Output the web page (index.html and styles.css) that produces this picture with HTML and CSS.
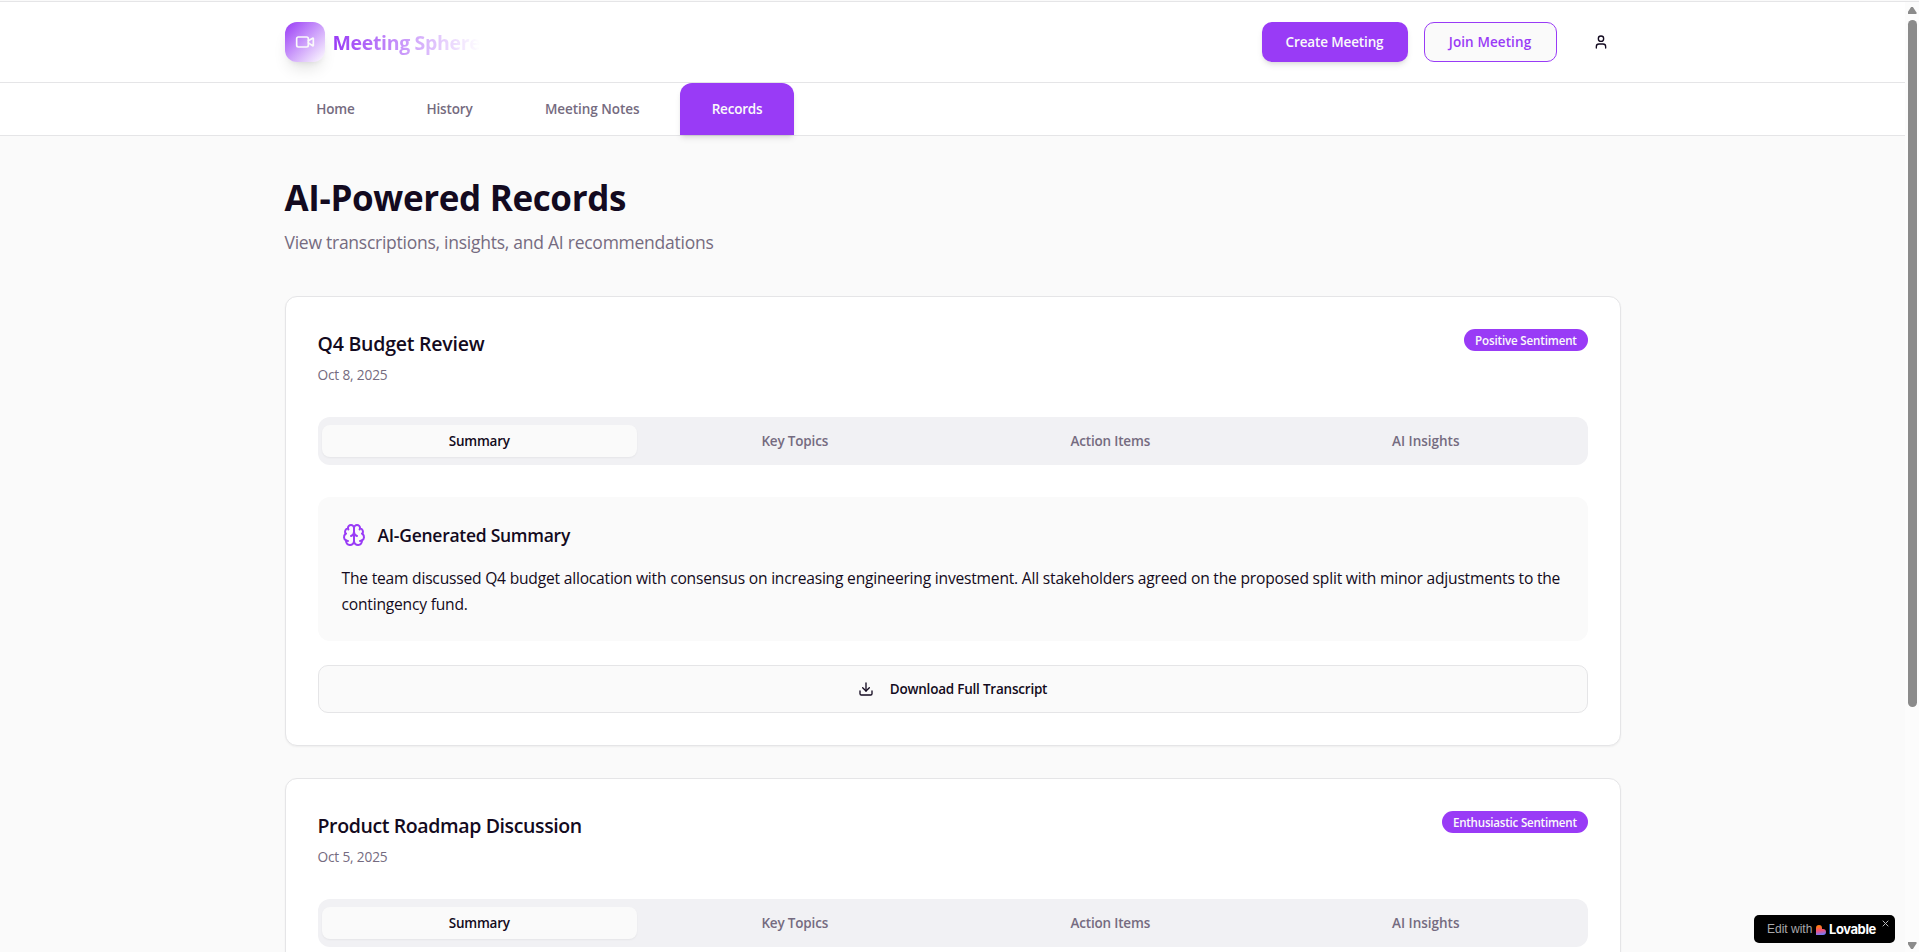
FILE: index.html
```html
<!DOCTYPE html>
<html lang="en">
<head>
<meta charset="utf-8">
<title>Meeting Sphere</title>
<link rel="stylesheet" href="styles.css">
</head>
<body>
<div class="page">
  <header class="topbar">
    <div class="container topbar-row">
      <div class="brand">
        <span class="logo"><svg class="icon" width="20" height="20" viewBox="0 0 24 24"><path d="m16 13 5.223 3.482a.5.5 0 0 0 .777-.416V7.87a.5.5 0 0 0-.752-.432L16 10.5"/><rect x="2" y="6" width="14" height="12" rx="2"/></svg></span>
        <span class="brand-name">Meeting Sphere</span>
      </div>
      <div class="actions">
        <button class="btn create">Create Meeting</button>
        <button class="btn join">Join Meeting</button>
        <button class="user" aria-label="Account"><svg class="icon" width="16" height="16" viewBox="0 0 24 24"><path d="M19 21v-2a4 4 0 0 0-4-4H9a4 4 0 0 0-4 4v2"/><circle cx="12" cy="7" r="4"/></svg></button>
      </div>
    </div>
  </header>
  <nav class="nav">
    <div class="container nav-row">
      <a class="nav-link home">Home</a>
      <a class="nav-link history">History</a>
      <a class="nav-link notes">Meeting Notes</a>
      <a class="nav-link records">Records</a>
    </div>
  </nav>
  <main class="container main">
    <h1 class="title">AI-Powered Records</h1>
    <p class="subtitle">View transcriptions, insights, and AI recommendations</p>

    <section class="card">
      <div class="card-head">
        <div>
          <h2 class="card-title">Q4 Budget Review</h2>
          <p class="date">Oct 8, 2025</p>
        </div>
        <span class="badge">Positive Sentiment</span>
      </div>
      <div class="tabs">
        <button class="tab active">Summary</button>
        <button class="tab">Key Topics</button>
        <button class="tab">Action Items</button>
        <button class="tab insights">AI Insights</button>
      </div>
      <div class="panel">
        <div class="panel-head">
          <svg class="icon brain" width="24" height="24" viewBox="0 0 24 24"><path d="M12 5a3 3 0 1 0-5.997.125 4 4 0 0 0-2.526 5.77 4 4 0 0 0 .556 6.588A4 4 0 1 0 12 18Z"/><path d="M12 5a3 3 0 1 1 5.997.125 4 4 0 0 1 2.526 5.77 4 4 0 0 1-.556 6.588A4 4 0 1 1 12 18Z"/><path d="M15 13a4.5 4.5 0 0 1-3-4 4.5 4.5 0 0 1-3 4"/><path d="M17.599 6.5a3 3 0 0 0 .399-1.375"/><path d="M6.003 5.125A3 3 0 0 0 6.401 6.5"/><path d="M3.477 10.896a4 4 0 0 1 .585-.396"/><path d="M19.938 10.5a4 4 0 0 1 .585.396"/><path d="M6 18a4 4 0 0 1-1.967-.516"/><path d="M19.967 17.484A4 4 0 0 1 18 18"/></svg>
          <h3 class="panel-title">AI-Generated Summary</h3>
        </div>
        <p class="panel-text">The team discussed Q4 budget allocation with consensus on increasing engineering investment. All stakeholders agreed on the proposed split with minor adjustments to the contingency fund.</p>
      </div>
      <button class="download"><svg class="icon" width="16" height="16" viewBox="0 0 24 24"><path d="M21 15v4a2 2 0 0 1-2 2H5a2 2 0 0 1-2-2v-4"/><path d="m7 10 5 5 5-5"/><path d="M12 15V3"/></svg>Download Full Transcript</button>
    </section>

    <section class="card">
      <div class="card-head">
        <div>
          <h2 class="card-title roadmap">Product Roadmap Discussion</h2>
          <p class="date">Oct 5, 2025</p>
        </div>
        <span class="badge enthusiastic">Enthusiastic Sentiment</span>
      </div>
      <div class="tabs">
        <button class="tab active">Summary</button>
        <button class="tab">Key Topics</button>
        <button class="tab">Action Items</button>
        <button class="tab insights">AI Insights</button>
      </div>
    </section>
  </main>
</div>

<div class="lovable">
  <span class="edit">Edit with</span>
  <svg class="heart" width="10" height="10" viewBox="0 0 10 10"><defs><linearGradient id="h" x1=".35" y1="0" x2=".5" y2="1"><stop offset=".15" stop-color="#ff7a1a"/><stop offset=".55" stop-color="#f0507c"/><stop offset="1" stop-color="#6d7cff"/></linearGradient></defs><path fill="url(#h)" d="M0 3a3 3 0 0 1 6 0v1h1a3 3 0 0 1 0 6H0z"/></svg>
  <span class="lovable-name">Lovable</span>
  <svg class="close" width="7" height="7" viewBox="0 0 7 7"><path d="M.7.7l5.6 5.6M6.3.7.7 6.3"/></svg>
</div>
<div class="scrollbar">
  <span class="arrow up"></span>
  <span class="thumb"></span>
  <span class="arrow down"></span>
</div>
</body>
</html>
```
FILE: styles.css
```css
* { box-sizing: border-box; margin: 0; }
html, body { height: 100%; }
body {
  overflow: hidden;
  background: #fafafa;
  color: #130a20;
  font-family: "Open Sans", "Noto Sans", sans-serif;
}
button { font: inherit; border: 0; padding: 0; color: inherit; }
.icon { fill: none; stroke: currentColor; stroke-width: 2; stroke-linecap: round; stroke-linejoin: round; flex: none; }
.page { height: 952px; overflow: hidden; padding-top: 1px; background: #fafafa; }
.container { width: 1336px; margin-left: 284.5px; }

.topbar { height: 82px; background: #fff; border-top: 1px solid #e5e5e7; border-bottom: 1px solid #e5e5e7; }
.topbar-row { height: 80px; display: flex; align-items: center; justify-content: space-between; }
.brand { display: flex; align-items: center; gap: 8px; }
.logo {
  width: 40px; height: 40px; border-radius: 12px;
  display: flex; align-items: center; justify-content: center;
  color: #fafafa;
  background: linear-gradient(135deg, #993bf6, rgba(153, 59, 246, 0));
  box-shadow: 0 10px 15px -3px rgba(0, 0, 0, .1), 0 4px 6px -4px rgba(0, 0, 0, .1);
}
.brand-name {
  font-size: 19.5px; font-weight: 700; line-height: 28px; letter-spacing: -.33px; padding-top: 2px;
  color: transparent;
  background: linear-gradient(90deg, #993bf6, rgba(153, 59, 246, 0));
  -webkit-background-clip: text; background-clip: text;
}
.actions { display: flex; align-items: center; }
.btn { height: 40px; border-radius: 10px; font-size: 13.5px; font-weight: 600; letter-spacing: -.13px; }
.create { width: 146px; background: #993bf6; color: #fafafa; box-shadow: 0 4px 6px -1px rgba(0, 0, 0, .1), 0 2px 4px -2px rgba(0, 0, 0, .1); }
.join { width: 133px; margin-left: 16px; background: #fafafa; border: 1px solid #993bf6; color: #993bf6; letter-spacing: .1px; }
.user { width: 40px; height: 40px; margin-left: 24px; background: none; display: flex; align-items: center; justify-content: center; }

.nav { height: 53px; background: #fff; border-bottom: 1px solid #e5e5e7; }
.nav-row { height: 52px; display: flex; gap: 8px; }
.nav-link {
  display: flex; align-items: center; justify-content: center;
  font-size: 13.5px; font-weight: 600; letter-spacing: -.15px; color: #756b80;
}
.home { width: 102px; }
.history { width: 110px; }
.notes { width: 159.5px; letter-spacing: -.05px; }
.records { width: 114px; letter-spacing: -.22px; color: #fafafa; background: #993bf6; border-radius: 12px 12px 0 0; box-shadow: 0 4px 6px -1px rgba(0, 0, 0, .1), 0 2px 4px -2px rgba(0, 0, 0, .1); }

.main { padding-top: 40px; }
.title { font-size: 35px; font-weight: 700; line-height: 40px; letter-spacing: -.36px; margin-top: 2px; }
.subtitle { font-size: 17.5px; line-height: 28px; letter-spacing: -.255px; color: #756b80; margin: 10px 0 40px; }
.card {
  height: 450px; margin-bottom: 32px; padding: 32px;
  background: #fff; border: 1px solid #e5e5e7; border-radius: 12px;
  box-shadow: 0 1px 2px rgba(0, 0, 0, .05);
}
.card-head { display: flex; justify-content: space-between; align-items: flex-start; height: 56px; }
.card-title { font-size: 19.5px; font-weight: 600; line-height: 28px; letter-spacing: -.22px; padding-top: 1px; }
.roadmap { letter-spacing: -.38px; }
.date { font-size: 13.7px; line-height: 20px; letter-spacing: -.17px; color: #756b80; margin-top: 7px; }
.badge {
  height: 22px; padding: 1px 10.75px 0; border-radius: 11px; background: #993bf6; color: #fafafa;
  font-size: 11.6px; font-weight: 600; line-height: 22px; letter-spacing: -.17px;
}
.enthusiastic { letter-spacing: -.23px; }
.tabs {
  height: 48px; margin-top: 32px; padding: 8px 4px; border-radius: 12px; background: #f1f1f4;
  display: grid; grid-template-columns: repeat(4, 1fr);
}
.tab { background: none; border-radius: 8px; font-size: 13.5px; font-weight: 600; letter-spacing: -.18px; color: #756b80; }
.insights { letter-spacing: 0; }
.active { background: #fafafa; color: #130a20; letter-spacing: -.24px; box-shadow: 0 1px 2px rgba(0, 0, 0, .05); }
.panel { height: 144px; margin-top: 32px; padding: 24px; border-radius: 12px; background: #fafafa; }
.panel-head { display: flex; align-items: center; gap: 12px; height: 28px; margin-bottom: 16px; }
.brain { color: #993bf6; }
.panel-title { font-size: 17.5px; font-weight: 600; line-height: 28px; letter-spacing: -.27px; }
.panel-text { font-size: 15.6px; line-height: 26px; letter-spacing: -.205px; }
.download {
  width: 100%; height: 48px; margin-top: 24px; background: #fafafa; border: 1px solid #e5e5e7; border-radius: 10px;
  display: flex; align-items: center; justify-content: center; gap: 16px;
  font-size: 13.5px; font-weight: 600; letter-spacing: -.22px;
}

.lovable {
  position: absolute; left: 1754px; top: 915px; width: 141px; height: 28px; border-radius: 5px; background: #000;
  display: flex; align-items: center; padding-left: 13px;
  font-family: "Liberation Sans", Arial, sans-serif;
}
.edit { width: 49px; font-size: 12px; letter-spacing: 0; color: #a9a9ac; white-space: nowrap; }
.heart { margin-top: 1px; }
.lovable-name { margin-left: 3px; font-family: Inter, sans-serif; font-size: 13px; font-weight: 700; letter-spacing: -.42px; color: #fff; }
.close { position: absolute; right: 6px; top: 5px; fill: none; stroke: #b9b9bc; stroke-width: 1; }

.scrollbar {
  position: absolute; left: 1905px; top: 2px; width: 14px; height: 950px; background: #fcfcfc;
  display: flex; flex-direction: column; align-items: center; padding: 5px 0 3px 0;
}
.arrow { width: 9px; height: 7px; background: #8b8b8b; }
.up { clip-path: polygon(40% 0, 60% 0, 100% 80%, 100% 100%, 0 100%, 0 80%); }
.down { clip-path: polygon(0 0, 100% 0, 100% 20%, 60% 100%, 40% 100%, 0 20%); margin-top: auto; }
.thumb { width: 9px; height: 687px; margin-top: 6px; border-radius: 5px; background: #8b8b8b; }
```
